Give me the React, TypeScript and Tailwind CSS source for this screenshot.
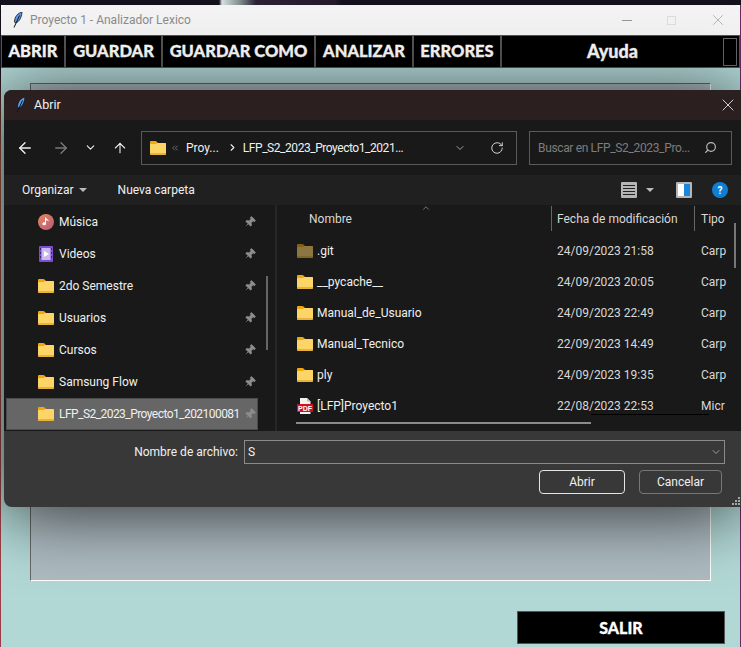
import { ArrowLeft, ArrowRight, ArrowUp, ChevronDown, ChevronRight, ChevronUp, ChevronsLeft, Pin, RotateCw, Search, X } from "lucide-react";

const Folder = ({ dim }: { dim?: boolean }) => (
  <svg width="16" height="14" viewBox="0 0 16 14" className={dim ? "shrink-0 opacity-50" : "shrink-0"}>
    <path d="M0 1.2C0 .5.5 0 1.2 0h4.2c.5 0 .8.2 1.1.5L8 2h6.8c.7 0 1.2.5 1.2 1.2V8H0z" fill="#eda90f" />
    <path d="M0 4.2C0 3.6.5 3 1.2 3H6l1.5-1h7.3c.7 0 1.2.5 1.2 1.2v9.6c0 .7-.5 1.2-1.2 1.2H1.2C.5 14 0 13.5 0 12.8z" fill="#fdd566" />
    <path d="M0 12h16v.8c0 .7-.5 1.2-1.2 1.2H1.2C.5 14 0 13.5 0 12.8z" fill="#e9b23a" />
  </svg>
);

const Feather = () => (
  <svg width="10" height="16" viewBox="0 0 10 16" className="shrink-0">
    <path d="M9 0C5 1 1.5 4.5 1.5 10l1 1C6 10 8.500 6 9 0z" fill="#5b9be8" stroke="#10151c" strokeWidth=".8" />
    <path d="M6.500 3.500 1 15.500" stroke="#10151c" strokeWidth="1" />
  </svg>
);

const Music = () => (
  <svg width="16" height="16" viewBox="0 0 16 16" className="shrink-0">
    <defs>
      <linearGradient id="mus" x1="0" y1="0" x2="1" y2="1">
        <stop offset="0" stopColor="#e8875f" />
        <stop offset="1" stopColor="#b85a78" />
      </linearGradient>
    </defs>
    <circle cx="8" cy="8" r="8" fill="url(#mus)" />
    <path d="M8 3.500v6.300a1.800 1.500 0 1 1-1-1.300V3.500zM8 3.500c.3 1.500 2 1.800 2.500 2.800V7.500C10 6.500 8.800 6.300 8 6z" fill="#fff" />
  </svg>
);

const Video = () => (
  <svg width="16" height="16" viewBox="0 0 16 16" className="shrink-0">
    <rect x="1" width="14" height="16" rx="1" fill="#7c4fd0" />
    <rect x="3.500" y="2" width="9" height="12" fill="#c9b7f0" />
    <path d="M6 5v6l5-3z" fill="#fff" />
    <path d="M2 2h.8v2H2zM2 6h.8v2H2zM2 10h.8v2H2zM13.200 2h.8v2h-.8zM13.200 6h.8v2h-.8zM13.200 10h.8v2h-.8z" fill="#2c1a56" />
  </svg>
);

const PdfIcon = () => (
  <svg width="16" height="16" viewBox="0 0 16 16" className="shrink-0">
    <path d="M3 0h7l3.500 3.500V16H3z" fill="#f2f2f2" />
    <path d="M10 0l3.500 3.500H10z" fill="#bdbdbd" />
    <rect y="6" width="16" height="8" fill="#d2101a" />
    <text x="8" y="12.600" textAnchor="middle" fontSize="7" fontWeight="700" fill="#fff" fontFamily="Liberation Sans, sans-serif">PDF</text>
  </svg>
);

const Grip = () => (
  <svg width="9" height="9" viewBox="0 0 9 9" className="absolute bottom-[1px] right-0" fill="#a8a8a8">
    <rect x="6" y="0" width="2" height="2" />
    <rect x="3" y="3" width="2" height="2" />
    <rect x="6" y="3" width="2" height="2" />
    <rect x="0" y="6" width="2" height="2" />
    <rect x="3" y="6" width="2" height="2" />
    <rect x="6" y="6" width="2" height="2" />
  </svg>
);

const sidebar = [
  { name: "Música", icon: <Music /> },
  { name: "Videos", icon: <Video /> },
  { name: "2do Semestre", icon: <Folder /> },
  { name: "Usuarios", icon: <Folder /> },
  { name: "Cursos", icon: <Folder /> },
  { name: "Samsung Flow", icon: <Folder /> },
  { name: "LFP_S2_2023_Proyecto1_202100081", icon: <Folder />, active: true },
];

const files = [
  { name: ".git", date: "24/09/2023 21:58", type: "Carp", icon: <Folder dim /> },
  { name: "__pycache__", date: "24/09/2023 20:05", type: "Carp", icon: <Folder /> },
  { name: "Manual_de_Usuario", date: "24/09/2023 22:49", type: "Carp", icon: <Folder /> },
  { name: "Manual_Tecnico", date: "22/09/2023 14:49", type: "Carp", icon: <Folder /> },
  { name: "ply", date: "24/09/2023 19:35", type: "Carp", icon: <Folder /> },
  { name: "[LFP]Proyecto1", date: "22/08/2023 22:53", type: "Micr", icon: <PdfIcon /> },
];

const menu = [
  { label: "ABRIR", width: "w-[64px]" },
  { label: "GUARDAR", width: "w-[97px]" },
  { label: "GUARDAR COMO", width: "w-[153px]" },
  { label: "ANALIZAR", width: "w-[98px]" },
  { label: "ERRORES", width: "w-[88px]" },
];

const AbrirDialog = () => (
  <div className="absolute left-[4px] top-[90px] flex h-[417px] w-[737px] flex-col overflow-hidden rounded-l-lg bg-[#383838] font-['Roboto',sans-serif] text-[12px] text-[#f0f0f0] shadow-[0_6px_70px_rgba(0,0,0,0.75)]">
    {/* title */}
    <div className="flex h-[30px] shrink-0 items-center bg-[#2b1f20] pl-[12px]">
      <Feather />
      <span className="ml-[8px] text-[12.5px]">Abrir</span>
      <X className="ml-auto mr-[3px] h-[20px] w-[20px]" strokeWidth={1} />
    </div>

    {/* address bar */}
    <div className="flex h-[55px] shrink-0 items-center bg-[#191919]">
      <ArrowLeft className="ml-[12px] h-[18px] w-[18px]" strokeWidth={1.8} />
      <ArrowRight className="ml-[18px] h-[18px] w-[18px] text-[#7a7a7a]" strokeWidth={1.8} />
      <ChevronDown className="ml-[14px] h-[13px] w-[13px]" strokeWidth={2} />
      <ArrowUp className="ml-[15px] h-[16px] w-[16px]" strokeWidth={1.6} />
      <div className="ml-[13px] flex h-[34px] w-[376px] items-center border border-[#5a5a5a] pl-[8px]">
        <Folder />
        <ChevronsLeft className="ml-[4px] h-[10px] w-[10px] text-[#999]" strokeWidth={1.5} />
        <span className="ml-[6px]">Proy...</span>
        <ChevronRight className="ml-[8px] h-[11px] w-[11px]" strokeWidth={2.4} />
        <span className="ml-[5px] tracking-[-0.45px]">LFP_S2_2023_Proyecto1_2021...</span>
        <ChevronDown className="ml-auto h-[12px] w-[12px] text-[#ccc]" strokeWidth={1.5} />
        <RotateCw className="ml-[24px] mr-[12px] h-[14px] w-[14px] text-[#ddd]" strokeWidth={1.6} />
      </div>
      <div className="ml-[12px] flex h-[34px] w-[203px] items-center border border-[#5a5a5a] pl-[8px] text-[#7d7d7d]">
        <span className="tracking-[-0.35px]">Buscar en LFP_S2_2023_Pro...</span>
        <Search className="ml-auto mr-[14px] h-[13px] w-[13px] -scale-x-100 text-[#bbb]" strokeWidth={2.2} />
      </div>
    </div>

    {/* command bar */}
    <div className="flex h-[30px] shrink-0 items-center bg-[#202020] pl-[18px]">
      <span>Organizar</span>
      <span className="ml-[5px] h-0 w-0 border-x-[4px] border-t-[4px] border-x-transparent border-t-[#bbb]" />
      <span className="ml-[31px]">Nueva carpeta</span>
      <div className="ml-auto flex h-[16px] w-[16px] flex-col justify-center gap-[2px] rounded-[1px] bg-[#b5b5b5] px-[2px]">
        <span className="h-px bg-[#222]" />
        <span className="h-px bg-[#222]" />
        <span className="h-px bg-[#222]" />
        <span className="h-px bg-[#222]" />
      </div>
      <span className="ml-[9px] h-0 w-0 border-x-[4px] border-t-[4px] border-x-transparent border-t-[#bbb]" />
      <div className="ml-[22px] flex h-[16px] w-[16px] rounded-[1px] border-2 border-[#b5b5b5] bg-[#111]">
        <span className="w-1/2 bg-white" />
        <span className="w-1/2 bg-[#1c86dc]" />
      </div>
      <div className="ml-[20px] mr-[13px] flex h-[16px] w-[16px] items-center justify-center rounded-full bg-[#0f7fd6] text-[10px] font-bold text-white">?</div>
    </div>

    {/* panes */}
    <div className="flex h-[226px] shrink-0 bg-[#191919]">
      <div className="relative w-[273px] shrink-0 border-r-2 border-[#262626]">
        <div className="flex flex-col pl-[2px] pt-[1px]">
          {sidebar.map((item) => (
            <div
              key={item.name}
              className={
                item.active
                  ? "flex h-[32px] w-[252px] items-center border border-[#4d4d4d] bg-[#666666] pl-[31px]"
                  : "flex h-[32px] w-[252px] items-center pl-[32px]"
              }
            >
              {item.icon}
              <span className={item.active ? "ml-[5px] whitespace-nowrap tracking-[-0.55px]" : "ml-[5px] whitespace-nowrap"}>{item.name}</span>
              <Pin
                className="absolute left-[240px] h-[12px] w-[12px] rotate-45 fill-[#8c8c8c] text-[#8c8c8c]"
                strokeWidth={1.5}
              />
            </div>
          ))}
        </div>
        <div className="absolute left-[262px] top-[71px] h-[74px] w-[2px] bg-[#666]" />
      </div>

      <div className="relative flex-1 overflow-hidden">
        <div className="relative flex h-[27px] items-center pl-[32px] text-[#d8d8d8]">
          <ChevronUp className="absolute left-[144px] top-[-2px] h-[10px] w-[10px] text-[#aaa]" strokeWidth={1.5} />
          <span className="w-[242px]">Nombre</span>
          <div className="flex h-[25px] w-[143px] items-center border-l border-[#666] pl-[5px]">Fecha de modificación</div>
          <div className="flex h-[25px] items-center border-l border-[#666] pl-[6px]">Tipo</div>
        </div>
        <div className="flex flex-col pl-[20px] pt-[3px]">
          {files.map((file) => (
            <div key={file.name} className="flex h-[31px] items-center">
              {file.icon}
              <span className="ml-[4px] w-[240px] whitespace-nowrap">{file.name}</span>
              <span className="w-[144px] text-[#d8d8d8]">{file.date}</span>
              <span className="text-[#d8d8d8]">{file.type}</span>
            </div>
          ))}
        </div>
        <div className="absolute left-[19px] top-[217px] h-[2px] w-[295px] bg-[#8a8a8a]" />
        <div className="absolute left-[314px] top-[209px] h-px w-[118px] bg-black" />
        <div className="absolute left-[457px] top-[18px] h-[45px] w-[2px] bg-[#777]" />
      </div>
    </div>

    {/* footer */}
    <div className="relative flex flex-1 flex-col">
      <div className="mt-[9px] flex items-center">
        <span className="w-[234px] text-right">Nombre de archivo:</span>
        <div className="ml-[6px] flex h-[24px] w-[481px] items-center border border-[#8a8a8a] pl-[3px]">
          S
          <ChevronDown className="ml-auto mr-[2px] h-[12px] w-[12px] text-[#bbb]" strokeWidth={1.5} />
        </div>
      </div>
      <div className="ml-[535px] mt-[6px] flex gap-[14px]">
        <button className="h-[24px] w-[86px] rounded-[4px] border border-[#e4e4e4] text-[12px]">Abrir</button>
        <button className="h-[24px] w-[83px] rounded-[4px] border border-[#777] text-[12px]">Cancelar</button>
      </div>
      <Grip />
    </div>
  </div>
);

export default function App() {
  return (
    <div className="relative flex h-[647px] w-[741px] flex-col overflow-hidden">
      <div className="h-[5px] shrink-0 bg-[linear-gradient(90deg,#14101c_219px,#d8e0e0_222px,#7d8c8c_240px,#2c2135_256px,#241a2c_335px,#14101c_342px)]" />
      <div className="flex flex-1">
        <div className="w-px bg-[linear-gradient(180deg,#14101c,#14101c_10%,#a8583c_25%,#a04a3e_55%,#9c3a48)]" />
        <div className="flex flex-1 flex-col overflow-hidden rounded-t-lg bg-[#b2d8d6]">
          <div className="flex h-[30px] shrink-0 items-center bg-[#f3f3f3] pl-[12px] font-['Roboto',sans-serif] text-[12px] text-[#8c8c8c]">
            <Feather />
            <span className="ml-[7px]">Proyecto 1 - Analizador Lexico</span>
            <span className="ml-auto h-px w-[10px] bg-[#999]" />
            <span className="ml-[35px] h-[9px] w-[9px] border border-[#ddd]" />
            <X className="ml-[33px] mr-[13px] h-[18px] w-[18px] text-[#999]" strokeWidth={0.9} />
          </div>

          <div className="flex h-[33px] shrink-0 bg-black font-['Lato',sans-serif] text-[16.5px] font-black text-white [-webkit-text-stroke:0.3px_white]">
            {menu.map((m) => (
              <div key={m.label} className={`${m.width} flex items-center justify-center border border-[#555]`}>
                {m.label}
              </div>
            ))}
            <div className="flex flex-1 items-center border border-[#555] pr-[2px]">
              <span className="flex-1 text-center text-[18px]">Ayuda</span>
              <span className="h-[28px] w-[14px] border border-[#666]" />
            </div>
          </div>

          <div className="flex flex-1 flex-col pl-[29px] pr-[15px] pt-[15px]">
            <div className="h-[498px] w-[681px] border border-[#666] border-b-white border-r-white bg-[#aebcc2]" />
            <div className="mt-[30px] flex justify-end">
              <button className="h-[33px] w-[208px] border border-[#555] bg-black font-['Lato',sans-serif] text-[16px] font-black text-white [-webkit-text-stroke:0.3px_white]">
                SALIR
              </button>
            </div>
          </div>
        </div>
        <div className="w-px bg-[#6b2a5c]" />
      </div>
      <AbrirDialog />
    </div>
  );
}
